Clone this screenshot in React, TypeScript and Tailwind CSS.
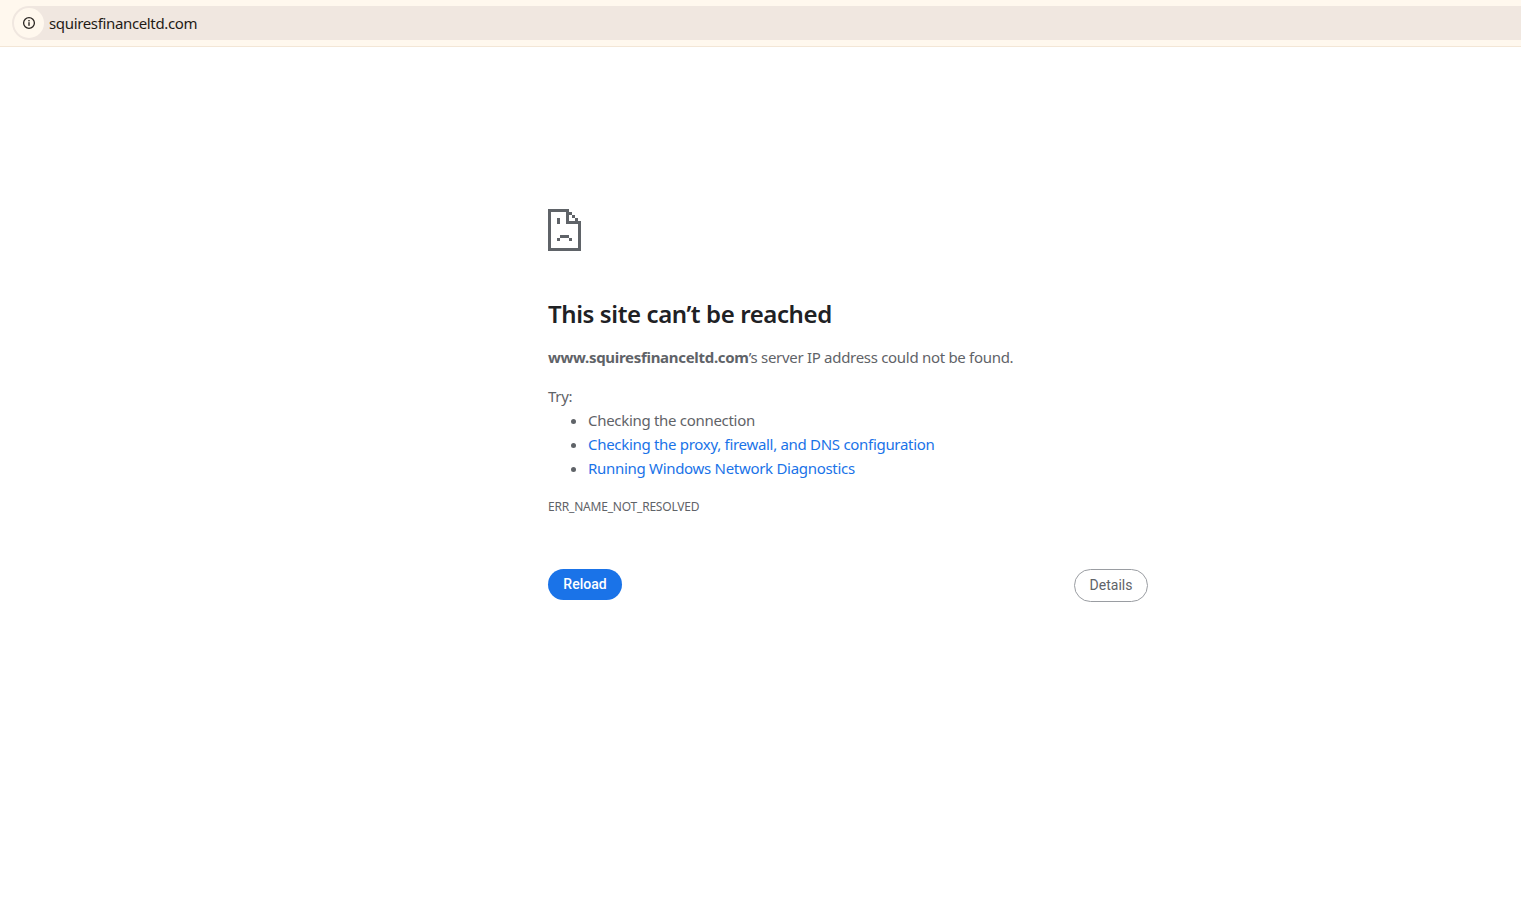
const bodyFont = "font-['Noto_Sans','Liberation_Sans',sans-serif]";

function SadPage() {
  return (
    <svg width="34" height="42" viewBox="0 0 34 42" shapeRendering="crispEdges" fill="#5f6368">
      <rect x="0" y="0" width="3" height="42" />
      <rect x="0" y="0" width="21" height="3" />
      <rect x="0" y="39" width="33" height="3" />
      <rect x="30" y="12" width="3" height="30" />
      <rect x="18" y="0" width="3" height="12" />
      <rect x="18" y="12" width="15" height="3" />
      <rect x="21" y="3" width="3" height="3" />
      <rect x="24" y="6" width="3" height="3" />
      <rect x="27" y="9" width="3" height="3" />
      <rect x="9" y="9" width="3" height="6" />
      <rect x="12" y="26" width="9" height="3" />
      <rect x="9" y="29" width="3" height="3" />
      <rect x="21" y="29" width="3" height="3" />
    </svg>
  );
}

function InfoIcon() {
  return (
    <svg width="14" height="14" viewBox="0 0 14 14" fill="none">
      <circle cx="7" cy="7" r="5.4" stroke="#2b2622" strokeWidth="1.3" />
      <rect x="6.3" y="6.2" width="1.4" height="3.6" fill="#2b2622" />
      <rect x="6.3" y="4" width="1.4" height="1.4" fill="#2b2622" />
    </svg>
  );
}

export default function App() {
  return (
    <div className={`min-h-[913px] bg-white ${bodyFont}`}>
      <div className="h-[47px] bg-[#fff8ee] border-b border-[#f3e6d6] pt-[6px] pl-[12px]">
        <div className="flex h-[34px] items-center rounded-l-[17px] bg-[#f0e7e0]">
          <div className="ml-[2px] flex h-[30px] w-[30px] items-center justify-center rounded-full bg-[#fff8ee]">
            <InfoIcon />
          </div>
          <span className="ml-[5px] text-[15px] tracking-[-0.35px] text-[#1f1b16]">squiresfinanceltd.com</span>
        </div>
      </div>

      <div className="ml-[548px] w-[600px] pt-[162px]">
        <SadPage />
        <h1 className="mt-[46px] text-[24px] leading-[34px] font-semibold tracking-[-0.4px] text-[#202124]">
          This site can&#8217;t be reached
        </h1>
        <p className="mt-[14px] text-[15px] leading-[24px] tracking-[-0.3px] text-[#5f6368]">
          <span className="font-bold">www.squiresfinanceltd.com</span>&#8217;s server IP address could not be found.
        </p>
        <p className="mt-[15px] text-[15px] leading-[24px] tracking-[-0.3px] text-[#5f6368]">Try:</p>
        <ul className="list-disc pl-[40px] text-[15px] leading-[24px] tracking-[-0.3px] text-[#5f6368]">
          <li>Checking the connection</li>
          <li><a className="text-[#1a73e8]">Checking the proxy, firewall, and DNS configuration</a></li>
          <li><a className="text-[#1a73e8]">Running Windows Network Diagnostics</a></li>
        </ul>
        <div className="mt-[15px] text-[12px] leading-[24px] tracking-[-0.2px] text-[#5f6368]">ERR_NAME_NOT_RESOLVED</div>
        <div className="mt-[50px] flex items-start justify-between">
          <button className="h-[31px] w-[74px] rounded-full bg-[#1a73e8] font-['Roboto',sans-serif] text-[14px] font-medium text-white">
            Reload
          </button>
          <button className="h-[33px] w-[74px] rounded-full border border-[#9a9da2] bg-white font-['Roboto',sans-serif] text-[14px] text-[#5f6368]">
            Details
          </button>
        </div>
      </div>
    </div>
  );
}
